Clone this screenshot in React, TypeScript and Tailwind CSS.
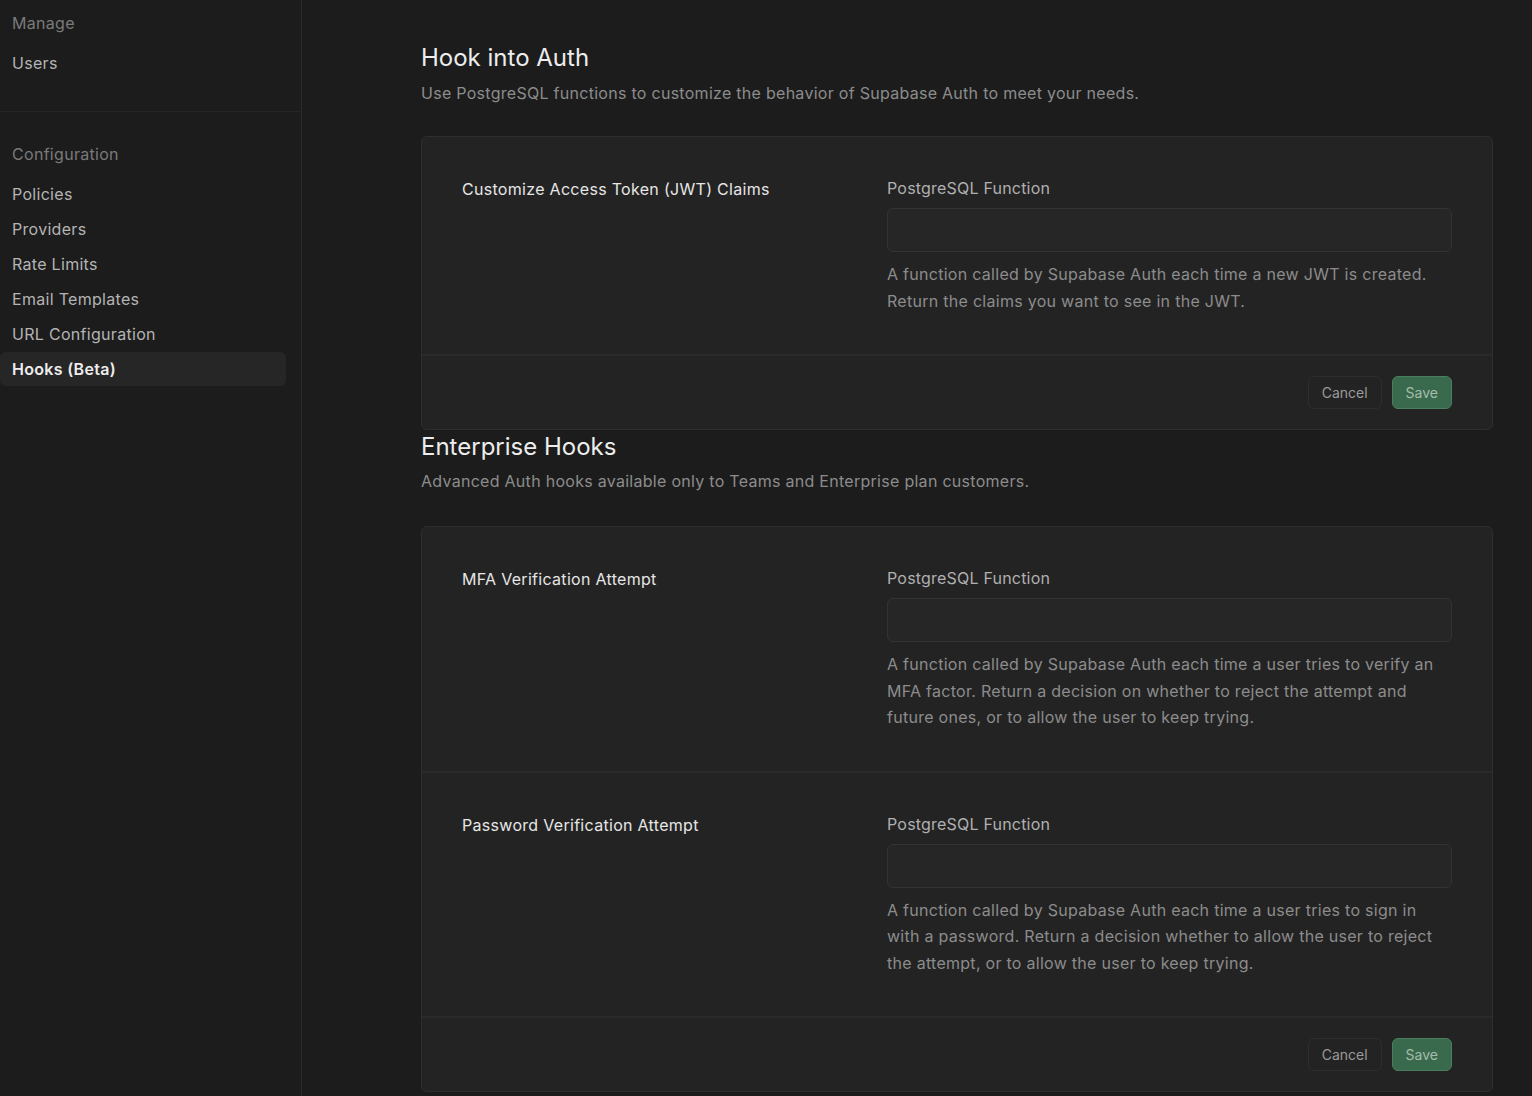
import React from "react";

const font = { fontFamily: "Inter, 'Noto Sans', sans-serif" };

function Sidebar() {
  const items = ["Policies", "Providers", "Rate Limits", "Email Templates", "URL Configuration"];
  return (
    <aside className="w-[302px] shrink-0 border-r border-[#2a2a2a] bg-[#1c1c1c] min-h-[1096px]">
      <div className="pt-[12px] pb-[37px] border-b border-[#262626]">
        <div className="px-3 h-[22px] leading-[22px] text-[16px] tracking-[0.3px] text-[#7a7a7a]">Manage</div>
        <div className="mt-[18px] px-3 h-[22px] leading-[22px] text-[16px] tracking-[0.3px] text-[#b4b4b4]">Users</div>
      </div>
      <div className="pt-[31px] pr-[15px]">
        <div className="px-3 h-[22px] leading-[22px] text-[16px] tracking-[0.3px] text-[#7a7a7a]">Configuration</div>
        <div className="mt-[12px] flex flex-col gap-[1px]">
          {items.map((i) => (
            <div key={i} className="px-3 h-[34px] leading-[34px] text-[16px] tracking-[0.3px] text-[#b4b4b4]">
              {i}
            </div>
          ))}
          <div className="px-3 h-[34px] leading-[34px] text-[16px] tracking-[0.3px] font-semibold text-[#ededed] bg-[#262626] rounded-md">
            Hooks (Beta)
          </div>
        </div>
      </div>
    </aside>
  );
}

function HookRow({ title, lines, border }: { title: string; lines: string[]; border?: boolean }) {
  return (
    <div className={`flex px-[40px] pt-[40px] pb-[40px] ${border ? "border-t-2 border-[#2a2a2a]" : ""}`}>
      <div className="w-[425px] shrink-0 text-[16px] tracking-[0.3px] text-[#e6e6e6] leading-[22px] pt-[1px]">{title}</div>
      <div className="flex-1">
        <div className="text-[16px] tracking-[0.2px] text-[#b0b0b0] leading-[22px]">PostgreSQL Function</div>
        <div className="mt-[9px] h-[44px] rounded-md bg-[#262626] border border-[#333333]" />
        <div className="mt-[9px] text-[16px] tracking-[0.28px] leading-[26.5px] text-[#8c8c8c]">
          {lines.map((l) => (
            <div key={l} className="whitespace-nowrap">{l}</div>
          ))}
        </div>
      </div>
    </div>
  );
}

function Footer() {
  return (
    <div className="border-t-2 border-[#2a2a2a] h-[75px] flex items-center justify-end gap-[10px] px-[40px]">
      <button className="h-[33px] px-[13px] rounded-md border border-[#2e2e2e] bg-[#232323] text-[14px] text-[#9a9a9a]">
        Cancel
      </button>
      <button className="h-[33px] px-[13px] rounded-md border border-[#4a7f5e] bg-[#3a6a4d] text-[14px] text-[#a3bcaa]">
        Save
      </button>
    </div>
  );
}

export default function App() {
  return (
    <div className="flex bg-[#1c1c1c] min-h-[1096px] overflow-hidden" style={font}>
      <Sidebar />
      <main className="flex-1 pl-[119px] pr-[39px] pt-[43px]">
        <h1 className="text-[24px] text-[#ededed] leading-[30px]">Hook into Auth</h1>
        <p className="mt-[8px] text-[16px] tracking-[0.28px] text-[#8c8c8c] leading-[24px]">
          Use PostgreSQL functions to customize the behavior of Supabase Auth to meet your needs.
        </p>
        <div className="mt-[31px] rounded-md border border-[#2e2e2e] bg-[#232323]">
          <HookRow
            title="Customize Access Token (JWT) Claims"
            lines={[
              "A function called by Supabase Auth each time a new JWT is created.",
              "Return the claims you want to see in the JWT.",
            ]}
          />
          <Footer />
        </div>
        <h2 className="mt-[2px] text-[24px] text-[#ededed] leading-[30px]">Enterprise Hooks</h2>
        <p className="mt-[7px] text-[16px] tracking-[0.28px] text-[#8c8c8c] leading-[24px]">
          Advanced Auth hooks available only to Teams and Enterprise plan customers.
        </p>
        <div className="mt-[33px] rounded-md border border-[#2e2e2e] bg-[#232323]">
          <HookRow
            title="MFA Verification Attempt"
            lines={[
              "A function called by Supabase Auth each time a user tries to verify an",
              "MFA factor. Return a decision on whether to reject the attempt and",
              "future ones, or to allow the user to keep trying.",
            ]}
          />
          <HookRow
            border
            title="Password Verification Attempt"
            lines={[
              "A function called by Supabase Auth each time a user tries to sign in",
              "with a password. Return a decision whether to allow the user to reject",
              "the attempt, or to allow the user to keep trying.",
            ]}
          />
          <Footer />
        </div>
      </main>
    </div>
  );
}
